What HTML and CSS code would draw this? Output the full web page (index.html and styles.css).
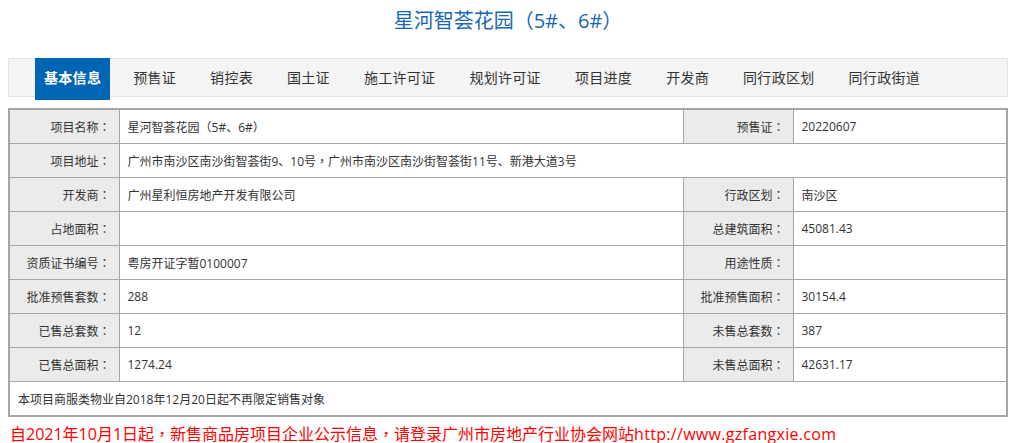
FILE: index.html
```html
<!DOCTYPE html>
<html lang="zh-CN">
<head>
    <meta charset="UTF-8">
    <title>星河智荟花园（5#、6#）</title>
    <link rel="stylesheet" href="styles.css">
</head>
<body>
    <div class="page">
        <h1 class="project-title">星河智荟花园<span class="pc" lang="zh-TW">（</span>5#、6#<span class="pc" lang="zh-TW">）</span></h1>

        <ul class="tab-nav">
            <li class="active">基本信息</li>
            <li>预售证</li>
            <li>销控表</li>
            <li>国土证</li>
            <li>施工许可证</li>
            <li>规划许可证</li>
            <li>项目进度</li>
            <li>开发商</li>
            <li>同行政区划</li>
            <li>同行政街道</li>
        </ul>

        <table class="info-table">
            <colgroup>
                <col class="col-label">
                <col class="col-value">
                <col class="col-label">
                <col>
            </colgroup>
            <tr>
                <th>项目名称<span class="pc" lang="zh-TW">：</span></th>
                <td>星河智荟花园<span class="pc" lang="zh-TW">（</span>5#、6#<span class="pc" lang="zh-TW">）</span></td>
                <th>预售证<span class="pc" lang="zh-TW">：</span></th>
                <td>20220607</td>
            </tr>
            <tr>
                <th>项目地址<span class="pc" lang="zh-TW">：</span></th>
                <td colspan="3">广州市南沙区南沙街智荟街9、10号<span class="pc" lang="zh-TW">，</span>广州市南沙区南沙街智荟街11号、新港大道3号</td>
            </tr>
            <tr>
                <th>开发商<span class="pc" lang="zh-TW">：</span></th>
                <td>广州星利恒房地产开发有限公司</td>
                <th>行政区划<span class="pc" lang="zh-TW">：</span></th>
                <td>南沙区</td>
            </tr>
            <tr>
                <th>占地面积<span class="pc" lang="zh-TW">：</span></th>
                <td></td>
                <th>总建筑面积<span class="pc" lang="zh-TW">：</span></th>
                <td>45081.43</td>
            </tr>
            <tr>
                <th>资质证书编号<span class="pc" lang="zh-TW">：</span></th>
                <td>粤房开证字暂0100007</td>
                <th>用途性质<span class="pc" lang="zh-TW">：</span></th>
                <td></td>
            </tr>
            <tr>
                <th>批准预售套数<span class="pc" lang="zh-TW">：</span></th>
                <td>288</td>
                <th>批准预售面积<span class="pc" lang="zh-TW">：</span></th>
                <td>30154.4</td>
            </tr>
            <tr>
                <th>已售总套数<span class="pc" lang="zh-TW">：</span></th>
                <td>12</td>
                <th>未售总套数<span class="pc" lang="zh-TW">：</span></th>
                <td>387</td>
            </tr>
            <tr>
                <th>已售总面积<span class="pc" lang="zh-TW">：</span></th>
                <td>1274.24</td>
                <th>未售总面积<span class="pc" lang="zh-TW">：</span></th>
                <td>42631.17</td>
            </tr>
            <tr>
                <td colspan="4" class="note">本项目商服类物业自2018年12月20日起不再限定销售对象</td>
            </tr>
        </table>

        <p class="notice">自2021年10月1日起<span class="pc" lang="zh-TW">，</span>新售商品房项目企业公示信息<span class="pc" lang="zh-TW">，</span>请登录广州市房地产行业协会网站<span class="url">http://www.gzfangxie.com</span></p>
    </div>
</body>
</html>
```

FILE: styles.css
```css
body {
    margin: 0;
    padding: 0;
    font-family: "Open Sans", "Noto Sans CJK SC", sans-serif;
    color: #333;
    background-color: #fff;
}

/* full-width punctuation sits centred in the original font */
.pc {
    font-family: "Noto Sans CJK TC", sans-serif;
}

.page {
    width: 1000px;
    margin-left: 8px;
}

.project-title {
    margin: 0 0 18px 0;
    height: 40px;
    line-height: 40px;
    text-align: center;
    font-size: 20px;
    font-weight: normal;
    color: #1767b5;
}

.tab-nav {
    list-style: none;
    margin: 0 0 11px 0;
    padding: 0 0 0 18px;
    height: 39px;
    box-sizing: border-box;
    background-color: #f4f4f4;
    border: 1px solid #e2e2e2;
    display: flex;
    align-items: flex-start;
}

.tab-nav li {
    margin: -1px 8px 0 8px;
    padding: 0 9px;
    height: 42px;
    line-height: 40px;
    font-size: 14px;
    letter-spacing: 0.3px;
    color: #333;
    white-space: nowrap;
    cursor: pointer;
}

.tab-nav li.active {
    margin-right: 6px;
    background-color: #0066b3;
    color: #fff;
    font-weight: bold;
}

.info-table {
    width: 1000px;
    border-collapse: collapse;
    border: 2px solid #a6a6a6;
    font-size: 12px;
}

.col-label {
    width: 110px;
}

.col-value {
    width: 564px;
}

.info-table th,
.info-table td {
    height: 33px;
    padding: 0 8px;
    border: 1px solid #a6a6a6;
    font-weight: normal;
    color: #333;
}

.info-table th {
    background-color: #ebebeb;
    text-align: right;
    padding-right: 8px;
}

.info-table td {
    text-align: left;
}

.notice {
    margin: 0;
    padding-left: 2px;
    line-height: 32px;
    font-size: 16px;
    color: #ff0000;
}

.notice .url {
    letter-spacing: 0.3px;
}
```
